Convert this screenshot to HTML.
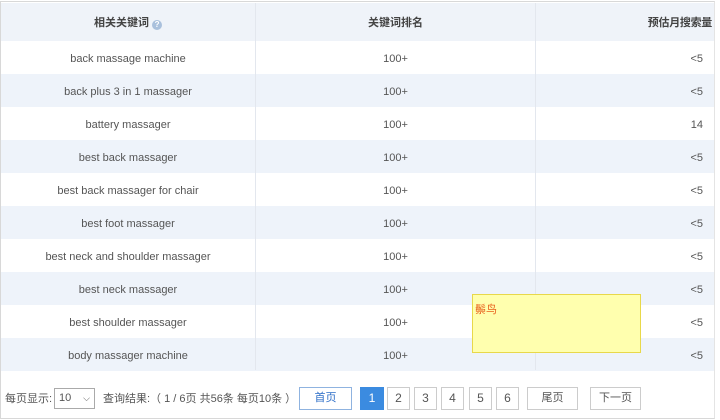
<!DOCTYPE html>
<html><head><meta charset="utf-8"><style>
*{margin:0;padding:0;box-sizing:border-box}
body{width:720px;height:420px;background:#fff;font-family:"Liberation Sans","Noto Sans CJK SC",sans-serif;font-size:11px;color:#555;position:relative;overflow:hidden}
.frame{position:absolute;left:0;top:1px;width:715px;height:418px;border:1px solid #d8d8d8;border-right-color:#e4e4e4}
.row{position:absolute;left:1px;width:713px;height:33px;line-height:37px}
.c1{position:absolute;left:0;width:254px;text-align:center}
.c2{position:absolute;left:254px;width:281px;text-align:center}
.c3{position:absolute;left:535px;width:177px;text-align:right;padding-right:10px}
.vl{position:absolute;top:3px;height:367px;width:1px;background:#e3e7ee}
.hd{font-weight:bold;color:#444;font-size:11px}
.b{position:absolute;top:387px;height:23px;border:1px solid #ccc;background:#fff;text-align:center;line-height:21px;font-size:12px;color:#555}
</style></head><body>
<div class="frame"></div>
<div class="row hd" style="top:3px;height:38px;line-height:41px;background:#eff3f9"><span class="c1">相关关键词 <span style="display:inline-block;width:10px;height:10px;border-radius:50%;background:#a9c0dc;color:#fff;font-size:8px;line-height:10px;vertical-align:-1px">?</span></span><span class="c2">关键词排名</span><span class="c3" style="padding-right:1px;letter-spacing:-0.3px">预估月搜索量</span></div>
<div class="row" style="top:41px"><span class="c1">back massage machine</span><span class="c2">100+</span><span class="c3">&lt;5</span></div>
<div class="row" style="top:74px;background:#eef3fa"><span class="c1">back plus 3 in 1 massager</span><span class="c2">100+</span><span class="c3">&lt;5</span></div>
<div class="row" style="top:107px"><span class="c1">battery massager</span><span class="c2">100+</span><span class="c3">14</span></div>
<div class="row" style="top:140px;background:#eef3fa"><span class="c1">best back massager</span><span class="c2">100+</span><span class="c3">&lt;5</span></div>
<div class="row" style="top:173px"><span class="c1">best back massager for chair</span><span class="c2">100+</span><span class="c3">&lt;5</span></div>
<div class="row" style="top:206px;background:#eef3fa"><span class="c1">best foot massager</span><span class="c2">100+</span><span class="c3">&lt;5</span></div>
<div class="row" style="top:239px"><span class="c1">best neck and shoulder massager</span><span class="c2">100+</span><span class="c3">&lt;5</span></div>
<div class="row" style="top:272px;background:#eef3fa"><span class="c1">best neck massager</span><span class="c2">100+</span><span class="c3">&lt;5</span></div>
<div class="row" style="top:305px"><span class="c1">best shoulder massager</span><span class="c2">100+</span><span class="c3">&lt;5</span></div>
<div class="row" style="top:338px;background:#eef3fa"><span class="c1">body massager machine</span><span class="c2">100+</span><span class="c3">&lt;5</span></div>
<div class="vl" style="left:255px"></div><div class="vl" style="left:535px"></div>
<div style="position:absolute;left:472px;top:294px;width:169px;height:59px;background:#ffffae;border:1px solid #e8d84a;color:#e8601c;font-size:11px;padding:6px 2px">鬃鸟</div>
<div style="position:absolute;left:5px;top:391px;line-height:17px">每页显示:</div>
<div style="position:absolute;left:54px;top:388px;width:41px;height:21px;border:1px solid #aaa;line-height:19px;padding-left:4px;font-size:11px">10<span style="position:absolute;right:4px;top:0;font-size:9px">⌵</span></div>
<div style="position:absolute;left:103px;top:391px;line-height:17px">查询结果:（ 1 / 6页 共56条 每页10条 ）</div>
<div class="b" style="left:299px;width:53px;border-color:#8fb3e0;color:#2f6fc8;font-size:11px">首页</div>
<div class="b" style="left:360px;width:24px;background:#3b8be0;border-color:#3b8be0;color:#fff">1</div>
<div class="b" style="left:387px;width:23px">2</div>
<div class="b" style="left:414px;width:23px">3</div>
<div class="b" style="left:441px;width:23px">4</div>
<div class="b" style="left:469px;width:23px">5</div>
<div class="b" style="left:496px;width:23px">6</div>
<div class="b" style="left:527px;width:51px;font-size:11px">尾页</div>
<div class="b" style="left:590px;width:51px;font-size:11px">下一页</div>
</body></html>
